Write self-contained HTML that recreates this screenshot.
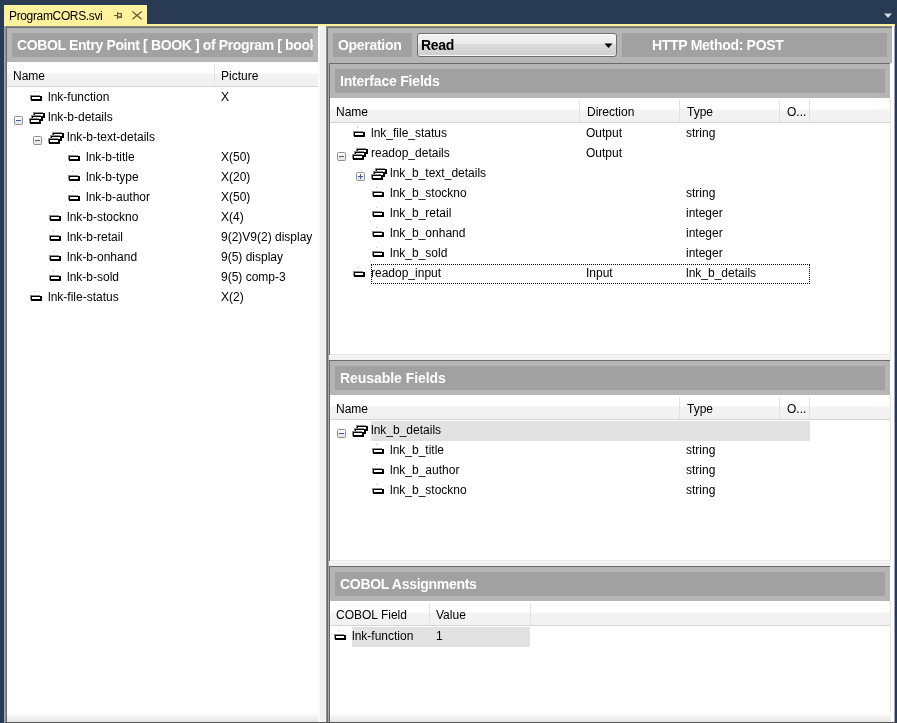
<!DOCTYPE html><html><head><meta charset="utf-8"><style>
html,body{margin:0;padding:0}
body{width:897px;height:723px;overflow:hidden;background:#283B52;position:relative;font-family:"Liberation Sans",sans-serif}
.a{position:absolute}
.t{position:absolute;font-size:12px;line-height:20px;color:#000;white-space:nowrap;will-change:transform}
.tab{position:absolute;will-change:transform;font-size:12px;line-height:19px;color:#000;white-space:nowrap}
.hdr{position:absolute;font-size:14px;letter-spacing:-0.3px;will-change:transform;font-weight:bold;line-height:24px;color:#fff;white-space:nowrap}
.colh{background:linear-gradient(#ffffff 0%,#ffffff 45%,#f3f3f3 50%,#f1f1f1 100%)}
.combo{border:1px solid #707070;border-radius:3px;box-shadow:inset 0 1px #fff,inset 0 -1px #f6f6f6;background:linear-gradient(#f3f3f3 0%,#ebebeb 45%,#dcdcdc 46%,#cfcfcf 100%)}
</style></head><body><svg width="0" height="0" style="position:absolute">
<defs>
<symbol id="fi" viewBox="0 0 13 7"><rect x="0" y="0" width="10" height="1" fill="#8A8A8A"/><rect x="0" y="0" width="1" height="5" fill="#8A8A8A"/><rect x="1" y="1" width="11" height="5" fill="#000"/><rect x="2" y="2" width="8" height="2" fill="#fff"/></symbol>
<symbol id="gi" viewBox="0 0 17 13">
<g transform="translate(4,0)"><rect x="0" y="0" width="10" height="1" fill="#8A8A8A"/><rect x="0" y="0" width="1" height="5" fill="#8A8A8A"/><rect x="1" y="1" width="11" height="5" fill="#000"/><rect x="2" y="2" width="8" height="2" fill="#fff"/></g>
<g transform="translate(2,3)"><rect x="0" y="0" width="10" height="1" fill="#8A8A8A"/><rect x="0" y="0" width="1" height="5" fill="#8A8A8A"/><rect x="1" y="1" width="11" height="5" fill="#000"/><rect x="2" y="2" width="8" height="2" fill="#fff"/></g>
<g transform="translate(0,6)"><rect x="0" y="0" width="10" height="1" fill="#8A8A8A"/><rect x="0" y="0" width="1" height="5" fill="#8A8A8A"/><rect x="1" y="1" width="11" height="5" fill="#000"/><rect x="2" y="2" width="8" height="2" fill="#fff"/></g>
</symbol>
<linearGradient id="eg" x1="0" y1="0" x2="0" y2="1"><stop offset="0" stop-color="#fff"/><stop offset="0.5" stop-color="#f4f4f4"/><stop offset="0.55" stop-color="#e6e6e6"/><stop offset="1" stop-color="#e9e9e9"/></linearGradient>
<symbol id="em" viewBox="0 0 9 9"><rect x="0.5" y="0.5" width="8" height="8" rx="1" fill="url(#eg)" stroke="#8F8F8F"/><rect x="2" y="4" width="5" height="1" fill="#3D5CA5"/></symbol>
<symbol id="ep" viewBox="0 0 9 9"><rect x="0.5" y="0.5" width="8" height="8" rx="1" fill="url(#eg)" stroke="#8F8F8F"/><rect x="2" y="4" width="5" height="1" fill="#3D5CA5"/><rect x="4" y="2" width="1" height="5" fill="#3D5CA5"/></symbol>
</defs></svg>
<div class="a" style="left:4px;top:5px;width:143px;height:19px;background:#FFF29D;"></div>
<div class="a" style="left:4px;top:24px;width:891px;height:2px;background:#FFF29D;"></div>
<div class="tab" style="left:9px;top:7px;letter-spacing:-0.35px">ProgramCORS.svi</div>
<svg class="a" style="left:112px;top:10px" width="12" height="11" viewBox="0 0 12 11" fill="#6E5C36"><rect x="2" y="5" width="3" height="1.1"/><rect x="5" y="2" width="1.2" height="7"/><rect x="5" y="3" width="5" height="1"/><rect x="8.6" y="3" width="1.4" height="5"/><rect x="5" y="6.3" width="5" height="1.6"/></svg>
<svg class="a" style="left:131px;top:10px" width="12" height="11" viewBox="0 0 12 11"><path d="M1.4 1.4L10.6 9.3M10.6 1.4L1.4 9.3" stroke="#6E5C36" stroke-width="1.3" fill="none"/></svg>
<svg class="a" style="left:883px;top:13px" width="10" height="6" viewBox="0 0 10 6"><path d="M1 0.5H9L5 5Z" fill="#D6DAE2"/></svg>
<div class="a" style="left:4px;top:26px;width:2px;height:697px;background:#9AA6C2;"></div>
<div class="a" style="left:891px;top:26px;width:3px;height:697px;background:#FFFFFF;"></div>
<div class="a" style="left:894px;top:26px;width:1px;height:697px;background:#9AA6C2;"></div>
<div class="a" style="left:5px;top:26px;width:313px;height:697px;background:#8E8E8E;"></div>
<div class="a" style="left:6px;top:27px;width:312px;height:696px;background:#6B6B6B;"></div>
<div class="a" style="left:7px;top:28px;width:311px;height:34px;background:#B5B5B5;"></div>
<div class="a" style="left:12px;top:33px;width:301px;height:24px;background:#A1A1A1;"></div>
<div class="hdr" style="left:17px;top:33px;width:296px;overflow:hidden;letter-spacing:-0.37px">COBOL Entry Point [ BOOK ] of Program [ book</div>
<div class="a" style="left:7px;top:62px;width:311px;height:661px;background:#FFFFFF;"></div>
<div class="a colh" style="left:7px;top:62px;width:311px;height:24px"></div>
<div class="a" style="left:7px;top:86px;width:311px;height:1px;background:#D5D5D5;"></div>
<div class="a" style="left:214px;top:64px;width:1px;height:22px;background:#E2E2E2;"></div>
<div class="t" style="left:13px;top:64px;line-height:24px">Name</div>
<div class="t" style="left:221px;top:64px;line-height:24px">Picture</div>
<div class="a" style="left:7px;top:713px;width:311px;height:9px;background:linear-gradient(#fff,#e4e4e4);"></div>
<div class="a" style="left:5px;top:722px;width:313px;height:1px;background:#555;"></div>
<svg class="a" style="left:30px;top:95px" width="13" height="7"><use href="#fi"/></svg>
<div class="a" style="left:34px;top:91px;width:1px;height:1px;background:#BDBDBD;"></div>
<div class="t" style="left:48px;top:87px;">lnk-function</div>
<div class="t" style="left:221px;top:87px;">X</div>
<svg class="a" style="left:14px;top:116px" width="9" height="9"><use href="#em"/></svg>
<svg class="a" style="left:29px;top:112px" width="17" height="13"><use href="#gi"/></svg>
<div class="t" style="left:48px;top:107px;">lnk-b-details</div>
<svg class="a" style="left:33px;top:136px" width="9" height="9"><use href="#em"/></svg>
<svg class="a" style="left:48px;top:132px" width="17" height="13"><use href="#gi"/></svg>
<div class="t" style="left:67px;top:127px;">lnk-b-text-details</div>
<svg class="a" style="left:68px;top:155px" width="13" height="7"><use href="#fi"/></svg>
<div class="a" style="left:72px;top:151px;width:1px;height:1px;background:#BDBDBD;"></div>
<div class="t" style="left:86px;top:147px;">lnk-b-title</div>
<div class="t" style="left:221px;top:147px;">X(50)</div>
<svg class="a" style="left:68px;top:175px" width="13" height="7"><use href="#fi"/></svg>
<div class="a" style="left:72px;top:171px;width:1px;height:1px;background:#BDBDBD;"></div>
<div class="t" style="left:86px;top:167px;">lnk-b-type</div>
<div class="t" style="left:221px;top:167px;">X(20)</div>
<svg class="a" style="left:68px;top:195px" width="13" height="7"><use href="#fi"/></svg>
<div class="a" style="left:72px;top:191px;width:1px;height:1px;background:#BDBDBD;"></div>
<div class="t" style="left:86px;top:187px;">lnk-b-author</div>
<div class="t" style="left:221px;top:187px;">X(50)</div>
<svg class="a" style="left:49px;top:215px" width="13" height="7"><use href="#fi"/></svg>
<div class="a" style="left:53px;top:211px;width:1px;height:1px;background:#BDBDBD;"></div>
<div class="t" style="left:67px;top:207px;">lnk-b-stockno</div>
<div class="t" style="left:221px;top:207px;">X(4)</div>
<svg class="a" style="left:49px;top:235px" width="13" height="7"><use href="#fi"/></svg>
<div class="a" style="left:53px;top:231px;width:1px;height:1px;background:#BDBDBD;"></div>
<div class="t" style="left:67px;top:227px;">lnk-b-retail</div>
<div class="t" style="left:221px;top:227px;">9(2)V9(2) display</div>
<svg class="a" style="left:49px;top:255px" width="13" height="7"><use href="#fi"/></svg>
<div class="a" style="left:53px;top:251px;width:1px;height:1px;background:#BDBDBD;"></div>
<div class="t" style="left:67px;top:247px;">lnk-b-onhand</div>
<div class="t" style="left:221px;top:247px;">9(5) display</div>
<svg class="a" style="left:49px;top:275px" width="13" height="7"><use href="#fi"/></svg>
<div class="a" style="left:53px;top:271px;width:1px;height:1px;background:#BDBDBD;"></div>
<div class="t" style="left:67px;top:267px;">lnk-b-sold</div>
<div class="t" style="left:221px;top:267px;">9(5) comp-3</div>
<svg class="a" style="left:30px;top:295px" width="13" height="7"><use href="#fi"/></svg>
<div class="a" style="left:34px;top:291px;width:1px;height:1px;background:#BDBDBD;"></div>
<div class="t" style="left:48px;top:287px;">lnk-file-status</div>
<div class="t" style="left:221px;top:287px;">X(2)</div>
<div class="a" style="left:318px;top:26px;width:8px;height:697px;background:#F0F0F0;"></div>
<div class="a" style="left:318px;top:26px;width:2px;height:697px;background:#FAFAFA;"></div>
<div class="a" style="left:326px;top:26px;width:566px;height:697px;background:#8E8E8E;"></div>
<div class="a" style="left:327px;top:27px;width:565px;height:696px;background:#6B6B6B;"></div>
<div class="a" style="left:328px;top:28px;width:564px;height:35px;background:#B5B5B5;"></div>
<div class="a" style="left:328px;top:63px;width:1px;height:660px;background:#A8A8A8;"></div>
<div class="a" style="left:890px;top:63px;width:4px;height:660px;background:#FFFFFF;"></div>
<div class="a" style="left:333px;top:33px;width:79px;height:24px;background:#A1A1A1;"></div>
<div class="hdr" style="left:338px;top:33px;">Operation</div>
<div class="a combo" style="left:417px;top:33px;width:198px;height:22px"></div>
<div class="hdr" style="left:421px;top:33px;color:#000">Read</div>
<svg class="a" style="left:604px;top:43px" width="9" height="6" viewBox="0 0 9 6"><path d="M0.5 0.5H8.5L4.5 5Z" fill="#000"/></svg>
<div class="a" style="left:622px;top:33px;width:265px;height:24px;background:#A1A1A1;"></div>
<div class="hdr" style="left:652px;top:33px;">HTTP Method: POST</div>
<div class="a" style="left:329px;top:63px;width:561px;height:1px;background:#6B6B6B;"></div>
<div class="a" style="left:330px;top:64px;width:560px;height:34px;background:#B5B5B5;"></div>
<div class="a" style="left:335px;top:69px;width:550px;height:24px;background:#A1A1A1;"></div>
<div class="hdr" style="left:340px;top:69px;letter-spacing:-0.2px">Interface Fields</div>
<div class="a" style="left:330px;top:98px;width:560px;height:256px;background:#FFFFFF;"></div>
<div class="a" style="left:329px;top:63px;width:1px;height:297px;background:#6B6B6B;"></div>
<div class="a" style="left:890px;top:98px;width:1px;height:257px;background:#E6E6E6;"></div>
<div class="a" style="left:330px;top:354px;width:561px;height:1px;background:#E6E6E6;"></div>
<div class="a" style="left:329px;top:355px;width:562px;height:5px;background:#F0F0F0;"></div>
<div class="a" style="left:329px;top:355px;width:562px;height:1px;background:#FAFAFA;"></div>
<div class="a colh" style="left:330px;top:98px;width:560px;height:24px"></div>
<div class="a" style="left:330px;top:122px;width:560px;height:1px;background:#D5D5D5;"></div>
<div class="t" style="left:336px;top:100px;line-height:24px">Name</div>
<div class="t" style="left:587px;top:100px;line-height:24px">Direction</div>
<div class="a" style="left:579px;top:100px;width:1px;height:22px;background:#E2E2E2;"></div>
<div class="t" style="left:687px;top:100px;line-height:24px">Type</div>
<div class="a" style="left:679px;top:100px;width:1px;height:22px;background:#E2E2E2;"></div>
<div class="t" style="left:787px;top:100px;line-height:24px">O...</div>
<div class="a" style="left:779px;top:100px;width:1px;height:22px;background:#E2E2E2;"></div>
<div class="a" style="left:809px;top:100px;width:1px;height:22px;background:#E2E2E2;"></div>
<svg class="a" style="left:353px;top:131px" width="13" height="7"><use href="#fi"/></svg>
<div class="a" style="left:357px;top:127px;width:1px;height:1px;background:#BDBDBD;"></div>
<div class="t" style="left:371px;top:123px;">lnk_file_status</div>
<div class="t" style="left:586px;top:123px;">Output</div>
<div class="t" style="left:686px;top:123px;">string</div>
<svg class="a" style="left:337px;top:152px" width="9" height="9"><use href="#em"/></svg>
<svg class="a" style="left:352px;top:148px" width="17" height="13"><use href="#gi"/></svg>
<div class="t" style="left:371px;top:143px;">readop_details</div>
<div class="t" style="left:586px;top:143px;">Output</div>
<svg class="a" style="left:356px;top:172px" width="9" height="9"><use href="#ep"/></svg>
<svg class="a" style="left:371px;top:168px" width="17" height="13"><use href="#gi"/></svg>
<div class="t" style="left:390px;top:163px;">lnk_b_text_details</div>
<svg class="a" style="left:372px;top:191px" width="13" height="7"><use href="#fi"/></svg>
<div class="a" style="left:376px;top:187px;width:1px;height:1px;background:#BDBDBD;"></div>
<div class="t" style="left:390px;top:183px;">lnk_b_stockno</div>
<div class="t" style="left:686px;top:183px;">string</div>
<svg class="a" style="left:372px;top:211px" width="13" height="7"><use href="#fi"/></svg>
<div class="a" style="left:376px;top:207px;width:1px;height:1px;background:#BDBDBD;"></div>
<div class="t" style="left:390px;top:203px;">lnk_b_retail</div>
<div class="t" style="left:686px;top:203px;">integer</div>
<svg class="a" style="left:372px;top:231px" width="13" height="7"><use href="#fi"/></svg>
<div class="a" style="left:376px;top:227px;width:1px;height:1px;background:#BDBDBD;"></div>
<div class="t" style="left:390px;top:223px;">lnk_b_onhand</div>
<div class="t" style="left:686px;top:223px;">integer</div>
<svg class="a" style="left:372px;top:251px" width="13" height="7"><use href="#fi"/></svg>
<div class="a" style="left:376px;top:247px;width:1px;height:1px;background:#BDBDBD;"></div>
<div class="t" style="left:390px;top:243px;">lnk_b_sold</div>
<div class="t" style="left:686px;top:243px;">integer</div>
<svg class="a" style="left:353px;top:271px" width="13" height="7"><use href="#fi"/></svg>
<div class="a" style="left:357px;top:267px;width:1px;height:1px;background:#BDBDBD;"></div>
<div class="t" style="left:371px;top:263px;">readop_input</div>
<div class="t" style="left:586px;top:263px;">Input</div>
<div class="t" style="left:686px;top:263px;">lnk_b_details</div>
<div class="a" style="left:371px;top:264px;width:437px;height:18px;border:1px dotted #000"></div>
<div class="a" style="left:329px;top:360px;width:561px;height:1px;background:#6B6B6B;"></div>
<div class="a" style="left:330px;top:361px;width:560px;height:34px;background:#B5B5B5;"></div>
<div class="a" style="left:335px;top:366px;width:550px;height:24px;background:#A1A1A1;"></div>
<div class="hdr" style="left:340px;top:366px;letter-spacing:-0.05px">Reusable Fields</div>
<div class="a" style="left:330px;top:395px;width:560px;height:165px;background:#FFFFFF;"></div>
<div class="a" style="left:329px;top:360px;width:1px;height:206px;background:#6B6B6B;"></div>
<div class="a" style="left:890px;top:395px;width:1px;height:166px;background:#E6E6E6;"></div>
<div class="a" style="left:330px;top:560px;width:561px;height:1px;background:#E6E6E6;"></div>
<div class="a" style="left:329px;top:561px;width:562px;height:5px;background:#F0F0F0;"></div>
<div class="a" style="left:329px;top:561px;width:562px;height:1px;background:#FAFAFA;"></div>
<div class="a colh" style="left:330px;top:395px;width:560px;height:24px"></div>
<div class="a" style="left:330px;top:419px;width:560px;height:1px;background:#D5D5D5;"></div>
<div class="t" style="left:336px;top:397px;line-height:24px">Name</div>
<div class="t" style="left:687px;top:397px;line-height:24px">Type</div>
<div class="a" style="left:679px;top:397px;width:1px;height:22px;background:#E2E2E2;"></div>
<div class="t" style="left:787px;top:397px;line-height:24px">O...</div>
<div class="a" style="left:779px;top:397px;width:1px;height:22px;background:#E2E2E2;"></div>
<div class="a" style="left:809px;top:397px;width:1px;height:22px;background:#E2E2E2;"></div>
<div class="a" style="left:371px;top:421px;width:439px;height:20px;background:#E2E2E2;"></div>
<svg class="a" style="left:337px;top:429px" width="9" height="9"><use href="#em"/></svg>
<svg class="a" style="left:352px;top:425px" width="17" height="13"><use href="#gi"/></svg>
<div class="t" style="left:371px;top:420px;">lnk_b_details</div>
<svg class="a" style="left:372px;top:448px" width="13" height="7"><use href="#fi"/></svg>
<div class="a" style="left:376px;top:444px;width:1px;height:1px;background:#BDBDBD;"></div>
<div class="t" style="left:390px;top:440px;">lnk_b_title</div>
<div class="t" style="left:686px;top:440px;">string</div>
<svg class="a" style="left:372px;top:468px" width="13" height="7"><use href="#fi"/></svg>
<div class="a" style="left:376px;top:464px;width:1px;height:1px;background:#BDBDBD;"></div>
<div class="t" style="left:390px;top:460px;">lnk_b_author</div>
<div class="t" style="left:686px;top:460px;">string</div>
<svg class="a" style="left:372px;top:488px" width="13" height="7"><use href="#fi"/></svg>
<div class="a" style="left:376px;top:484px;width:1px;height:1px;background:#BDBDBD;"></div>
<div class="t" style="left:390px;top:480px;">lnk_b_stockno</div>
<div class="t" style="left:686px;top:480px;">string</div>
<div class="a" style="left:329px;top:566px;width:561px;height:1px;background:#6B6B6B;"></div>
<div class="a" style="left:330px;top:567px;width:560px;height:34px;background:#B5B5B5;"></div>
<div class="a" style="left:335px;top:572px;width:550px;height:24px;background:#A1A1A1;"></div>
<div class="hdr" style="left:340px;top:572px;">COBOL Assignments</div>
<div class="a" style="left:330px;top:601px;width:560px;height:112px;background:#FFFFFF;"></div>
<div class="a" style="left:329px;top:566px;width:1px;height:157px;background:#6B6B6B;"></div>
<div class="a" style="left:890px;top:601px;width:1px;height:121px;background:#E6E6E6;"></div>
<div class="a colh" style="left:330px;top:601px;width:560px;height:24px"></div>
<div class="a" style="left:330px;top:625px;width:560px;height:1px;background:#D5D5D5;"></div>
<div class="t" style="left:336px;top:603px;line-height:24px">COBOL Field</div>
<div class="t" style="left:436px;top:603px;line-height:24px">Value</div>
<div class="a" style="left:429px;top:603px;width:1px;height:22px;background:#E2E2E2;"></div>
<div class="a" style="left:530px;top:603px;width:1px;height:22px;background:#E2E2E2;"></div>
<div class="a" style="left:352px;top:627px;width:178px;height:20px;background:#E2E2E2;"></div>
<svg class="a" style="left:334px;top:634px" width="13" height="7"><use href="#fi"/></svg>
<div class="a" style="left:338px;top:630px;width:1px;height:1px;background:#BDBDBD;"></div>
<div class="t" style="left:352px;top:626px;">lnk-function</div>
<div class="t" style="left:436px;top:626px;">1</div>
<div class="a" style="left:330px;top:713px;width:561px;height:9px;background:linear-gradient(#fff,#e4e4e4);"></div>
<div class="a" style="left:326px;top:722px;width:568px;height:1px;background:#555;"></div>
<div class="a" style="left:7px;top:722px;width:888px;height:1px;background:#555;"></div>
</body></html>
